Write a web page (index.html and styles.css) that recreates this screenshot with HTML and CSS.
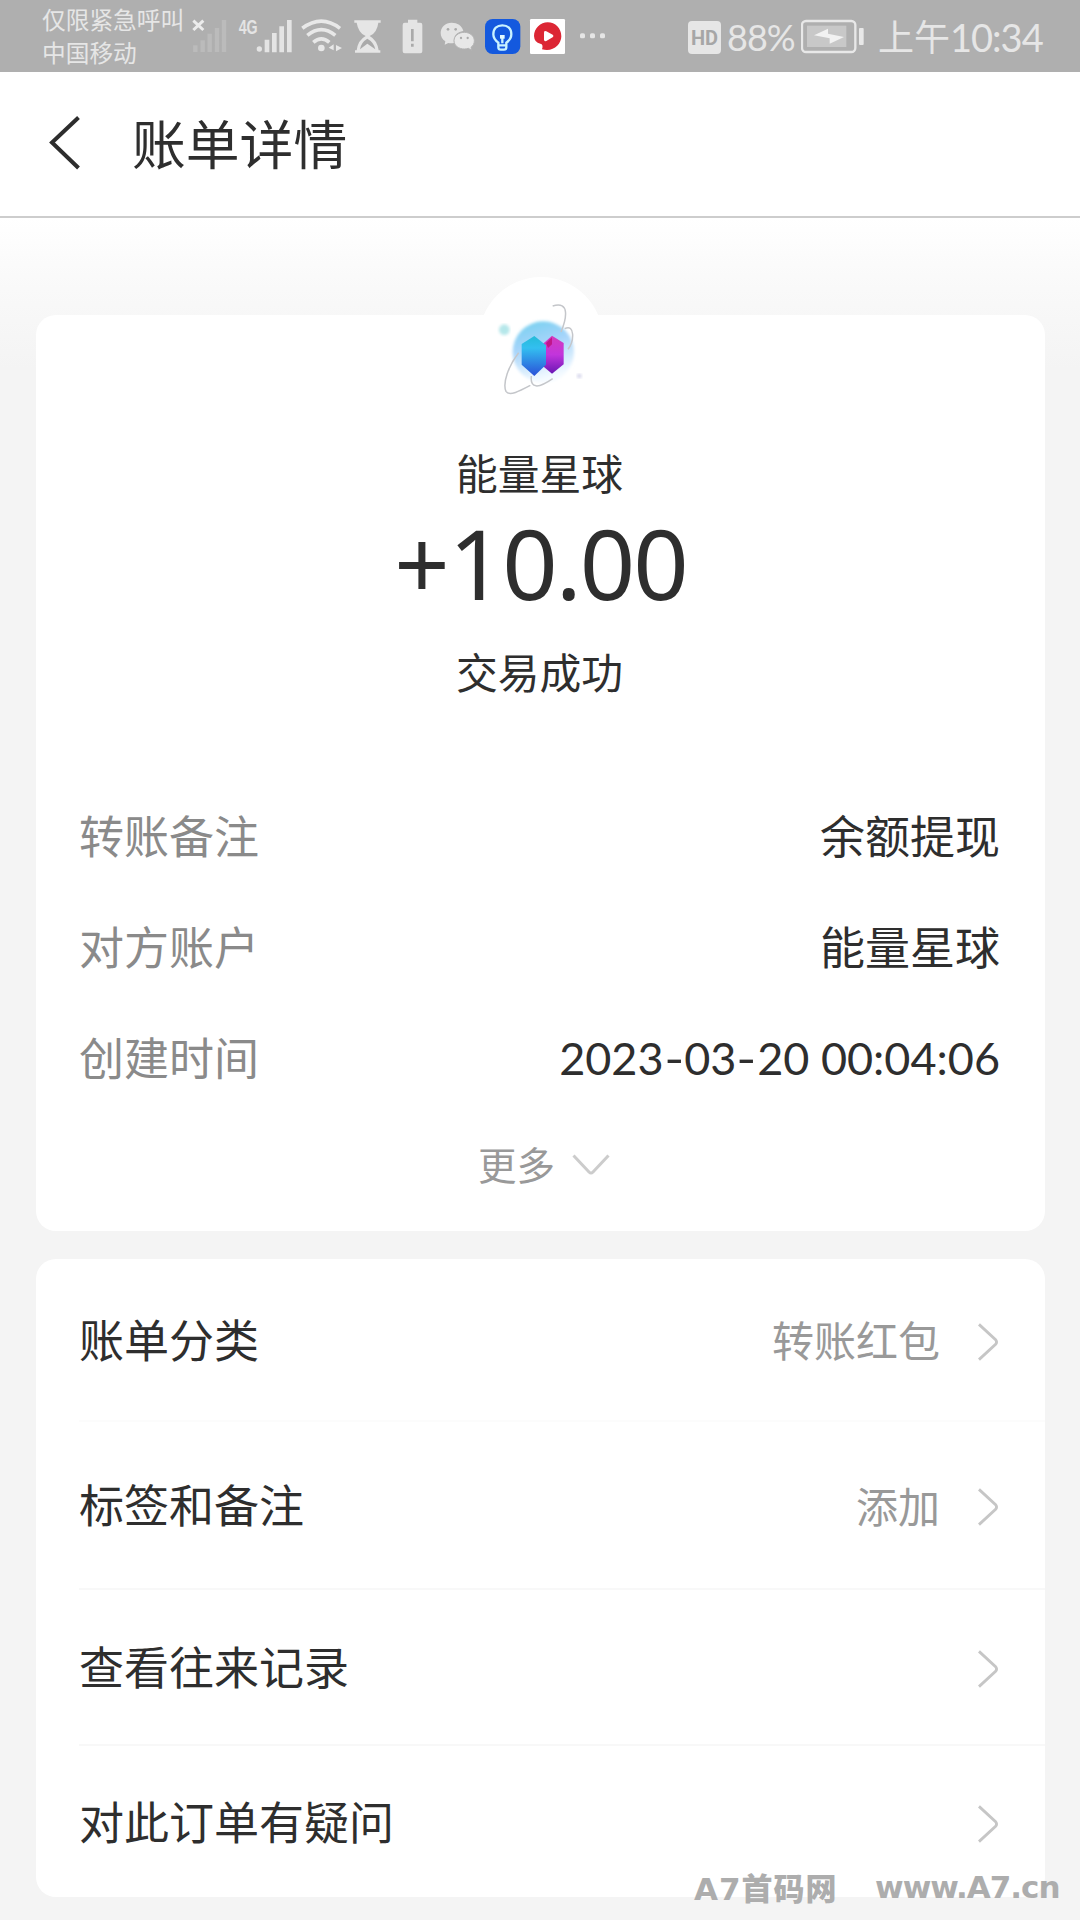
FILE: index.html
```html
<!DOCTYPE html>
<html lang="zh-CN">
<head>
<meta charset="utf-8">
<title>账单详情</title>
<link rel="stylesheet" href="styles.css">
</head>
<body>
<div class="statusbar">
  <div class="carrier"><span>仅限紧急呼叫</span><span>中国移动</span></div>
  <div class="status-icons">
    <svg width="110" height="36" viewBox="573 54 330 108">
      <path d="M580 62L610 90M610 62L580 90" stroke="#ececec" stroke-width="9" fill="none"/>
      <path d="M586 136V156M608 121V156M629 101V156M651 84V156M672 60V156" stroke="#bbb" stroke-width="13"/>
      <text class="net" x="716" y="101" textLength="57" lengthAdjust="spacingAndGlyphs">4G</text>
      <circle cx="778" cy="147" r="8" fill="#e4e4e4"/>
      <path d="M801 119V157M823 99V157M845 79V157M868 60V157" stroke="#e4e4e4" stroke-width="14"/>
    </svg>
    <svg width="44" height="36" viewBox="903 54 132 108" fill="none" stroke="#e8e8e8" stroke-width="11">
      <path d="M907 85Q964 42 1020 85M922 106Q964 72 1006 106M940 127Q964 106 988 127"/>
      <circle cx="964" cy="144" r="10" fill="#e8e8e8" stroke="none"/>
      <path d="M1001 133V151L986 143ZM1008 135V154L1026 144Z" fill="#e8e8e8" stroke="none"/>
    </svg>
    <svg width="48" height="36" viewBox="15 54 144 108">
      <path d="M43 61H122V68H115Q111 99 89 108Q111 120 116 151H121V158H45V151H50Q54 120 77 108Q55 99 50 68H43Z" fill="#e6e6e6"/>
      <path d="M82 116Q63 127 60 148L82 131L106 148Q102 127 82 116Z" fill="#aaa"/>
    </svg>
    <svg width="39" height="36" viewBox="159 54 117 108">
      <path d="M204 59H232V68H241Q247 68 247 75V154Q247 160 241 160H194Q188 160 188 154V75Q188 68 194 68H204Z" fill="#e4e4e4"/>
      <path d="M217 87V124M217 131V140" stroke="#aaa" stroke-width="8"/>
    </svg>
    <svg width="48" height="36" viewBox="276 54 144 108">
      <path d="M335 68C316 68 302 82 302 99C302 109 307 118 316 124L314 134L325 129Q333 131 342 129C340 106 351 96 370 93C366 76 352 68 335 68Z" fill="#e4e4e4"/>
      <path d="M373 97C355 97 342 108 342 122C342 137 356 147 373 147Q380 147 385 145L395 151L393 142C400 137 403 130 403 122C403 108 390 97 373 97Z" fill="#e8e8e8" stroke="#b4b4b4" stroke-width="3"/>
      <g fill="#aaa"><circle cx="324" cy="88" r="4"/><circle cx="347" cy="88" r="4"/><circle cx="363" cy="114" r="3.5"/><circle cx="383" cy="114" r="3.5"/></g>
    </svg>
    <svg width="45" height="36" viewBox="420 54 135 108">
      <rect x="435" y="57" width="106" height="105" rx="23" fill="#1459de"/>
      <path d="M475 136V128C465 121 460 113 460 103C460 86 471 76 487 76S514 86 514 103C514 113 509 121 499 128V136ZM475 136V142Q475 149 482 149H492Q499 149 499 142V136M487 130V111" fill="none" stroke="#c9f2ff" stroke-width="7"/>
      <path d="M480 105H494V116H480Z" fill="#e5faff"/>
    </svg>
    <svg width="45" height="36" viewBox="555 54 135 108">
      <rect x="570" y="57" width="105" height="105" rx="4" fill="#fff"/>
      <path d="M623 67C602 67 582 85 582 108Q583 128 601 131Q611 133 606 148C638 158 664 134 664 109C664 85 646 67 623 67Z" fill="#dc2634"/>
      <path d="M612 97Q613 91 619 94L638 104Q643 108 638 112L619 123Q613 125 612 119Z" fill="#fff"/>
    </svg>
    <svg width="45" height="36" viewBox="690 54 135 108" fill="#e6e6e6">
      <rect x="720" y="100" width="15" height="15" rx="5"/><rect x="750" y="100" width="15" height="15" rx="5"/><rect x="780" y="100" width="15" height="15" rx="5"/>
    </svg>
  </div>
  <div class="status-right">
    <span class="hd">HD</span>
    <span class="pct">88%</span>
    <svg width="63" height="36" viewBox="427 54 189 108">
      <rect x="430" y="63" width="160" height="93" rx="12" fill="none" stroke="#e8e8e8" stroke-width="7"/>
      <rect x="445" y="77" width="118" height="64" fill="#c8c8c8"/>
      <path d="M466 106L508 86V101L556 111L513 131V115Z" fill="#f2f2f2"/>
      <rect x="601" y="84" width="14" height="51" rx="3" fill="#e8e8e8"/>
    </svg>
    <span class="ampm">上午</span><span class="clock">10:34</span>
  </div>
</div>
<header class="header">
  <svg width="32" height="54" viewBox="0 0 32 54" fill="none" stroke="#2d2d2d" stroke-width="4"><path d="M29.500 1.500L3 26.500L29.500 52"/></svg>
  <h1 class="title">账单详情</h1>
</header>
<main class="page">
  <section class="card summary">
    <div class="avatar">
      <svg width="124" height="124" viewBox="117 81 372 372">
        <defs>
          <linearGradient id="sphere" x1="0" y1="0" x2="0.300" y2="1"><stop offset="0" stop-color="#70d0ee"/><stop offset=".45" stop-color="#a5d4fa"/><stop offset="1" stop-color="#f4faff"/></linearGradient>
          <linearGradient id="blue" x1="0" y1="0" x2="0" y2="1"><stop offset="0" stop-color="#24bbd8"/><stop offset=".3" stop-color="#33bff0"/><stop offset="1" stop-color="#2a50d8"/></linearGradient>
          <linearGradient id="pink" x1="0" y1="0" x2="0" y2="1"><stop offset="0" stop-color="#d53bbc"/><stop offset=".5" stop-color="#c235dc"/><stop offset="1" stop-color="#6a16b4"/></linearGradient>
          <filter id="soft"><feGaussianBlur stdDeviation="4"/></filter>
        </defs>
        <circle cx="310" cy="306" r="92" fill="url(#sphere)" filter="url(#soft)"/>
        <circle cx="193" cy="239" r="16" fill="#b5e7ea" filter="url(#soft)"/>
        <circle cx="418" cy="378" r="7" fill="#d3d3ea" filter="url(#soft)"/>
        <path d="M338 168C390 152 380 205 363 246M374 236C405 220 403 274 384 298M236 308C205 348 187 400 198 424C208 440 241 422 271 406M274 378C270 415 294 417 338 386" fill="none" stroke="#c4c6ca" stroke-width="4.500"/>
        <path d="M336 257L371 279V343L336 371L304 344V286Z" fill="url(#pink)"/>
        <path d="M318 279L336 262V283L324 294Z" fill="#c0168a"/>
        <path d="M283 258L318 286V344L283 378L245 344V282Z" fill="url(#blue)"/>
      </svg>
    </div>
    <div class="name">能量星球</div>
    <div class="amount"><span class="plus">+</span>10.00</div>
    <div class="state">交易成功</div>
    <dl class="details">
      <div class="detail"><dt>转账备注</dt><dd>余额提现</dd></div>
      <div class="detail"><dt>对方账户</dt><dd>能量星球</dd></div>
      <div class="detail"><dt>创建时间</dt><dd class="time">2023<i>-</i>03<i>-</i>20 00:04:06</dd></div>
    </dl>
    <div class="more"><span>更多</span><svg width="38" height="22" viewBox="0 0 38 22" fill="none" stroke="#ccc" stroke-width="3"><path d="M1.500 1.500L17 18Q19 20 21 18L36.500 1.500"/></svg></div>
  </section>
  <section class="card menu">
    <div class="row"><span>账单分类</span><span class="value">转账红包</span><svg class="arrow" viewBox="0 0 22 40"><path d="M1.500 1.500L19 17.500Q21 20 19 22.500L1.500 38.500"/></svg></div>
    <div class="row row-tags"><span>标签和备注</span><span class="value">添加</span><svg class="arrow" viewBox="0 0 22 40"><path d="M1.500 1.500L19 17.500Q21 20 19 22.500L1.500 38.500"/></svg></div>
    <div class="row row-history"><span>查看往来记录</span><span class="value"></span><svg class="arrow" viewBox="0 0 22 40"><path d="M1.500 1.500L19 17.500Q21 20 19 22.500L1.500 38.500"/></svg></div>
    <div class="row row-help"><span>对此订单有疑问</span><span class="value"></span><svg class="arrow" viewBox="0 0 22 40"><path d="M1.500 1.500L19 17.500Q21 20 19 22.500L1.500 38.500"/></svg></div>
  </section>
</main>
<div class="watermark"><span class="site">A7<b>首码网</b></span><span class="url">www.A7.cn</span></div>
</body>
</html>
```
FILE: styles.css
```css
* { box-sizing: border-box; }
body {
  margin: 0;
  width: 1080px;
  height: 1920px;
  overflow: hidden;
  position: relative;
  background: #f4f4f4;
  color: #2e2e2e;
  font-family: "Noto Sans CJK SC", sans-serif;
}
svg { display: block; flex: none; }

.statusbar {
  display: flex;
  height: 72px;
  background: #afafaf;
  color: #e6e6e6;
}
.carrier {
  width: 191px;
  padding: 3px 0 0 42px;
  display: flex;
  flex-direction: column;
  font-size: 23.700px;
  line-height: 32.500px;
  white-space: nowrap;
}
.status-icons { display: flex; padding-top: 18px; }
.net { font: bold 58px "Liberation Sans", sans-serif; fill: #e4e4e4; }
.status-right {
  display: flex;
  align-items: center;
  height: 74px;
  margin-left: 73px;
}
.hd {
  width: 33px;
  height: 33px;
  border-radius: 4px;
  background: #e6e6e6;
  color: #a6a6a6;
  font: bold 20px/34px Roboto, sans-serif;
  text-align: center;
}
.pct {
  width: 74px;
  margin-left: 6px;
  font: 36px/36px Lato, sans-serif;
  letter-spacing: -1px;
}
.status-right svg { margin-top: -2px; }
.ampm { margin: -4px 0 0 14px; font-size: 36px; line-height: 40px; }
.clock { font: 38px/38px Lato, sans-serif; letter-spacing: -1px; }

.header {
  display: flex;
  align-items: center;
  height: 146px;
  padding: 0 0 2px 49px;
  background: #fff;
  border-bottom: 2px solid #cdcdcd;
}
.title {
  margin: -3px 0 0 51px;
  font-size: 53.800px;
  font-weight: 400;
  line-height: 80px;
}

.page {
  display: flex;
  flex-direction: column;
  gap: 28px;
  height: 1702px;
  padding: 97px 35px 0 36px;
  background: linear-gradient(#fff 0, #f9f9f9 70px, #f4f4f4 150px);
}
.card { background: #fff; border-radius: 20px; }
.summary {
  display: flex;
  flex-direction: column;
  align-items: center;
  height: 916px;
}
.avatar {
  width: 124px;
  height: 124px;
  margin-top: -38px;
  border-radius: 50%;
  background: #fff;
}
.name { margin: 41px 2px 0 0; font-size: 41.800px; line-height: 60px; }
.amount {
  margin-top: 10px;
  font: 97px/100px "Noto Sans", sans-serif;
  letter-spacing: -2px;
}
.plus { margin-right: 1px; }
.state { margin: 29px 2px 0 0; font-size: 41.800px; line-height: 60px; }
.details { width: 100%; margin: 78px 0 0; padding: 0 45px 0 43px; }
.detail {
  display: flex;
  justify-content: space-between;
  align-items: center;
  height: 111px;
  font-size: 45px;
  line-height: 111px;
}
.detail dt { color: #8a8a8a; }
.detail dd { margin: 0; }
.detail .time { padding-top: 4px; font-family: Lato, sans-serif; font-size: 45px; }
.time i { display: inline-block; font-style: normal; transform: scaleX(1.200); padding: 0 2px; }
.more {
  display: flex;
  align-items: center;
  gap: 17px;
  margin: 21px 0 0 7px;
  color: #999;
  font-size: 38.500px;
  line-height: 60px;
}
.more svg { margin-top: 4px; }

.menu { height: 638px; }
.row {
  display: flex;
  align-items: center;
  height: 163px;
  margin-left: 43px;
  padding-right: 46px;
  font-size: 45px;
  line-height: 60px;
  border-bottom: 2px solid #fcfcfc;
}
.row span { margin-top: -2px; }
.row-tags { height: 168px; border-color: #f8f8f8; }
.row-history { height: 156px; border-color: #f8f8f8; }
.row-help { height: 151px; border: 0; }
.row .value { margin: -1px 0 0 auto; color: #999; font-size: 42px; }
.arrow {
  width: 22px;
  height: 38px;
  margin: 4px 0 0 37px;
  fill: none;
  stroke: #c6c6c6;
  stroke-width: 3;
}

.watermark {
  position: absolute;
  left: 694px;
  top: 1865px;
  display: flex;
  color: #adadad;
  font: bold 31px/44px "DejaVu Sans", "Noto Sans CJK SC", sans-serif;
  white-space: nowrap;
}
.site { width: 181px; letter-spacing: 1px; }
.site b { font: 900 31px/44px "Noto Sans CJK SC", sans-serif; }
.url { letter-spacing: -1px; }
```
